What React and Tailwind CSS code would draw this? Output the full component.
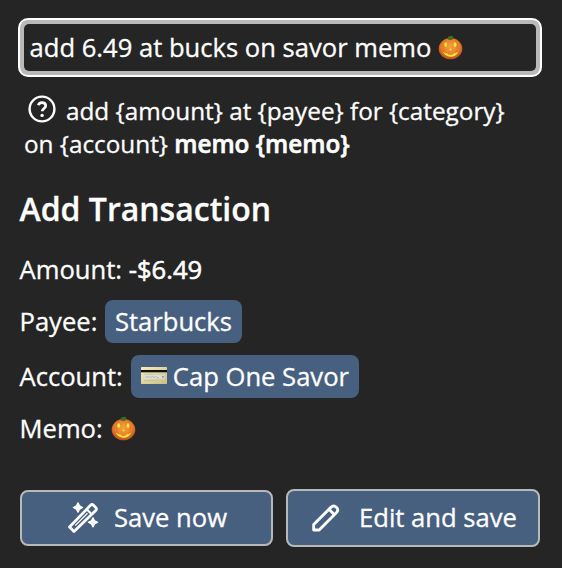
function Pumpkin({ className }) {
  return (
    <svg viewBox="0 0 26 26" className={className}>
      <defs>
        <radialGradient id="rind" cx="50%" cy="42%" r="58%">
          <stop offset="0" stopColor="#f3a23b" />
          <stop offset="0.65" stopColor="#e87e2b" />
          <stop offset="1" stopColor="#b8481c" />
        </radialGradient>
      </defs>
      <ellipse cx="13" cy="14.200" rx="12.300" ry="11" fill="url(#rind)" />
      <path d="M9 4C5 8 4.500 19 9 24.500M17 4c4 4 4.500 15 0 20.500" fill="none" stroke="#d96820" strokeWidth="0.9" opacity="0.7" />
      <path d="M10 3C10.500 .8 14 0 15.800 1.300L15.500 4.500c-1.500 1-4 1-5.500 0z" fill="#416b20" />
      <ellipse cx="8" cy="10" rx="1.500" ry="2.400" fill="#f6ea3b" />
      <ellipse cx="17.800" cy="10" rx="1.500" ry="2.400" fill="#f6ea3b" />
      <path d="M13 13.500l1.300 2.300h-2.600z" fill="#f6ea3b" />
      <path d="M5 17.500l3 1.700 1.600-.2 1 1.300 2.400.4 2.500-.4 1-1.400 1.500.1 3-1.700c-1.500 3.400-4.200 5.200-8 5.200s-6.700-1.800-8-5z" fill="#f6ea3b" />
    </svg>
  );
}

function CreditCard({ className }) {
  return (
    <svg viewBox="0 0 26 17" className={className}>
      <defs>
        <linearGradient id="card" x1="0" y1="0" x2="1" y2="1">
          <stop offset="0" stopColor="#f3edc3" />
          <stop offset="1" stopColor="#c9bd85" />
        </linearGradient>
      </defs>
      <rect width="26" height="17" rx="0.700" fill="url(#card)" />
      <rect y="3" width="26" height="2.300" fill="#11100c" />
      <rect x="2.500" y="8.200" width="21" height="3.500" fill="#dcdedd" />
      <path d="M4 10.500l1.500-1 1.500 1 1.500-1 1.500 1 1.500-1 1.500 1 1.500-1 1.500 1h2" fill="none" stroke="#a3acc2" strokeWidth="0.800" />
      <path d="M2.500 7.200h10M3 13.600h13" stroke="#c4b989" strokeWidth="0.600" />
      <rect x="21" y="9" width="1.800" height="1.800" fill="#8d9bb8" />
    </svg>
  );
}

function HelpIcon({ className }) {
  return (
    <svg viewBox="0 0 28 28" className={className} fill="none" stroke="white">
      <circle cx="14" cy="14" r="12.400" strokeWidth="2.400" />
      <path d="M10.400 10.300c.3-1.700 1.700-2.700 3.600-2.700 2.200 0 3.700 1.300 3.700 3.100 0 2.700-3.500 2.800-3.500 5.600" strokeWidth="2.700" />
      <circle cx="14.100" cy="20.400" r="1.700" fill="white" stroke="none" />
    </svg>
  );
}

function WandIcon({ className }) {
  return (
    <svg viewBox="0 0 32 32" className={className} fill="none" stroke="white" strokeWidth="2.700" strokeLinejoin="round">
      <path d="M2.500 25L23.500 3.300c1-1 2-1 3 0l2.200 2.200c1 1 1 2 0 3L7 29.500z" />
      <path d="M8.200 23.600L20.500 11.300" strokeWidth="1.300" />
      <path d="M20 7.500l4.500 4.500" strokeWidth="2.200" />
      <path d="M11 .9l1.600 3 3 1.600-3 1.600-1.600 3-1.600-3-3-1.600 3-1.600zM26 15.700l1.600 3 3 1.600-3 1.600-1.600 3-1.600-3-3-1.600 3-1.600z" fill="white" strokeWidth="1.200" />
    </svg>
  );
}

function PencilIcon({ className }) {
  return (
    <svg viewBox="0 0 28 28" className={className} fill="none" stroke="white" strokeWidth="2.900" strokeLinejoin="round">
      <path d="M1.700 20.500L18.800 3.400c1.900-1.900 3.800-1.900 5.600-.2s1.800 3.700-.1 5.600L7.200 26H1.700z" />
      <path d="M17 5.200l5.500 5.500" />
    </svg>
  );
}

export default function App() {
  return (
    <main className="h-[568px] w-[562px] overflow-hidden bg-[#252525] pt-[18px] font-['Open_Sans',sans-serif] text-[25.6px] leading-[36px] whitespace-nowrap text-white [-webkit-text-stroke:0.3px_white]">
      <div className="ml-[18px] h-[59px] w-[524px] rounded-[10px] bg-white p-[2px]">
        <div className="h-full rounded-[8px] bg-[#b9b9b9] p-[4px]">
          <div className="flex h-full items-center rounded-[5px] bg-[#252525] pl-[5.5px]">
            <span>add 6.49 at bucks on savor memo</span>
            <Pumpkin className="ml-[7px] h-[25px] w-[25px]" />
          </div>
        </div>
      </div>
      <div className="mt-[17px] ml-[24px] text-[24.3px] leading-[33px]">
        <div className="flex h-[33px]">
          <HelpIcon className="mt-px ml-[4px] h-[28px] w-[28px]" />
          <span className="ml-[10px]">{'add {amount} at {payee} for {category}'}</span>
        </div>
        <div>{'on {account} '}<b className="font-semibold [-webkit-text-stroke:0.6px_white]">{'memo {memo}'}</b></div>
      </div>
      <section className="ml-[19.5px]">
        <h1 className="mt-[27px] text-[32px] leading-[44px] font-semibold">Add Transaction</h1>
        <div className="mt-[21px] h-[36px]">Amount: <span className="[-webkit-text-stroke:0.6px_white]">-$6.49</span></div>
        <div className="mt-[12px] flex h-[43px] items-center">
          <span>Payee:</span>
          <span className="ml-[7.5px] flex h-[43px] items-center rounded-[8px] bg-[#48607f] px-[10px]">Starbucks</span>
        </div>
        <div className="mt-[12px] flex h-[43px] items-center">
          <span>Account:</span>
          <span className="ml-[8px] flex h-[43px] items-center rounded-[8px] bg-[#48607f] px-[10px]">
            <CreditCard className="mr-[6px] mb-[2px] h-[17px] w-[26px]" />
            Cap One Savor
          </span>
        </div>
        <div className="mt-[13px] flex h-[36px] items-center">
          <span>Memo:</span>
          <Pumpkin className="mb-px ml-[8px] h-[25px] w-[25px]" />
        </div>
      </section>
      <div className="mt-[42px] ml-[20px] flex items-center gap-[13px]">
        <button className="flex h-[56px] w-[253px] items-center rounded-[8px] border-2 border-[#b9b9b9] bg-[#48607f] pl-[45px]">
          <WandIcon className="h-[32px] w-[32px]" />
          <span className="ml-[15px]">Save now</span>
        </button>
        <button className="flex h-[58px] w-[254px] items-center rounded-[8px] border-2 border-[#b9b9b9] bg-[#48607f] pl-[24px]">
          <PencilIcon className="h-[28px] w-[28px]" />
          <span className="ml-[19px]">Edit and save</span>
        </button>
      </div>
    </main>
  );
}
